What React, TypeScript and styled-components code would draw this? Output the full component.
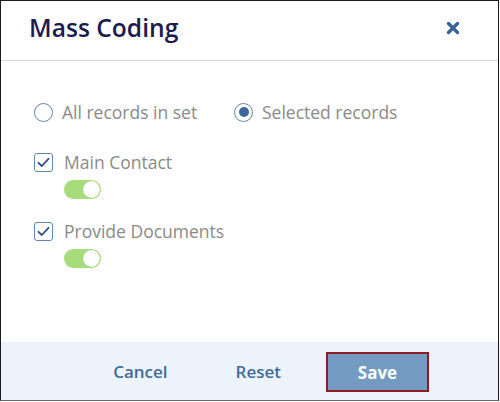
import React from "react";
import styled, { createGlobalStyle } from "styled-components";

const Global = createGlobalStyle`
  html, body { margin: 0; padding: 0; background: #ffffff; }
  body { font-family: "Open Sans", "Noto Sans", sans-serif; }
  * { box-sizing: border-box; }
`;

const Frame = styled.div`
  width: 499px;
  height: 401px;
  border: 1px solid #1c1c1c;
  border-bottom-color: #6b6b6b;
  display: flex;
  flex-direction: column;
  background: #ffffff;
`;

const Header = styled.div`
  height: 60px;
  flex: none;
  border-bottom: 1px solid #cfdcee;
  display: flex;
  align-items: center;
  justify-content: space-between;
  padding: 0 38px 6px 28px;
`;

const Title = styled.h1`
  margin: 0;
  font-size: 24.6px;
  font-weight: 600;
  color: #1e1a4f;
`;

const Close = styled.button`
  border: none;
  background: none;
  padding: 0;
  width: 14px;
  height: 14px;
  display: flex;
  cursor: pointer;
`;

const Body = styled.div`
  flex: 1;
  padding: 41px 33px 0 33px;
  display: flex;
  flex-direction: column;
`;

const RadioRow = styled.div`
  display: flex;
  align-items: center;
  height: 20px;
  margin-bottom: 30px;
`;

const RadioOption = styled.label`
  display: flex;
  align-items: center;
  width: 200px;
  font-size: 17.5px;
  color: #8a8a8a;
`;

const RadioCircle = styled.span<{ $on?: boolean }>`
  width: 19px;
  height: 19px;
  border-radius: 50%;
  border: 1.5px solid #6384ab;
  margin-right: 9px;
  display: flex;
  align-items: center;
  justify-content: center;
  flex: none;
  &::after {
    content: "";
    width: 10px;
    height: 10px;
    border-radius: 50%;
    background: ${(p) => (p.$on ? "#3c679c" : "transparent")};
  }
`;

const Field = styled.div`
  display: flex;
  flex-direction: column;
  margin-bottom: 22px;
`;

const CheckRow = styled.label`
  display: flex;
  align-items: center;
  height: 20px;
  font-size: 17.5px;
  color: #8a8a8a;
`;

const CheckBox = styled.span`
  width: 19px;
  height: 19px;
  border: 1.5px solid #6384ab;
  border-radius: 3px;
  margin-right: 11px;
  display: flex;
  align-items: center;
  justify-content: center;
  flex: none;
`;

const Toggle = styled.span`
  margin: 8px 0 0 30px;
  width: 37px;
  height: 19px;
  border-radius: 10px;
  background: #a6dc79;
  position: relative;
  display: block;
  &::after {
    content: "";
    position: absolute;
    right: 1px;
    top: 1px;
    width: 17px;
    height: 17px;
    border-radius: 50%;
    background: #ffffff;
    box-shadow: 0 0 1px rgba(0, 0, 0, 0.25);
  }
`;

const Footer = styled.div`
  height: 58px;
  flex: none;
  background: #edf3fa;
  display: flex;
  align-items: center;
  justify-content: flex-end;
  gap: 22px;
  padding: 0 69px 0 0;
`;

const TextButton = styled.button`
  border: none;
  background: none;
  padding: 0 23px;
  height: 39px;
  font-family: inherit;
  font-size: 17px;
  font-weight: 600;
  color: #426b9a;
  cursor: pointer;
`;

const SaveButton = styled.button`
  width: 103px;
  height: 40px;
  margin-top: 2px;
  border: 2px solid #8e1a22;
  background: #739bc1;
  color: #ffffff;
  font-family: inherit;
  font-size: 17px;
  font-weight: 700;
  cursor: pointer;
`;

const Check = () => (
  <svg width="13" height="11" viewBox="0 0 13 11">
    <path d="M1.5 5.8 L4.8 9 L11.5 1.8" fill="none" stroke="#2d4f82" strokeWidth="1.8" strokeLinecap="round" strokeLinejoin="round" />
  </svg>
);

export default function App() {
  return (
    <>
      <Global />
      <Frame>
        <Header>
          <Title>Mass Coding</Title>
          <Close aria-label="Close">
            <svg width="14" height="14" viewBox="0 0 14 14">
              <path d="M2.5 2.5 L11.5 11.5 M11.5 2.5 L2.5 11.5" stroke="#3c6398" strokeWidth="3.4" strokeLinecap="round" />
            </svg>
          </Close>
        </Header>
        <Body>
          <RadioRow>
            <RadioOption>
              <RadioCircle />
              All records in set
            </RadioOption>
            <RadioOption>
              <RadioCircle $on />
              Selected records
            </RadioOption>
          </RadioRow>
          <Field>
            <CheckRow>
              <CheckBox>
                <Check />
              </CheckBox>
              Main Contact
            </CheckRow>
            <Toggle />
          </Field>
          <Field>
            <CheckRow>
              <CheckBox>
                <Check />
              </CheckBox>
              Provide Documents
            </CheckRow>
            <Toggle />
          </Field>
        </Body>
        <Footer>
          <TextButton>Cancel</TextButton>
          <TextButton>Reset</TextButton>
          <SaveButton>Save</SaveButton>
        </Footer>
      </Frame>
    </>
  );
}
